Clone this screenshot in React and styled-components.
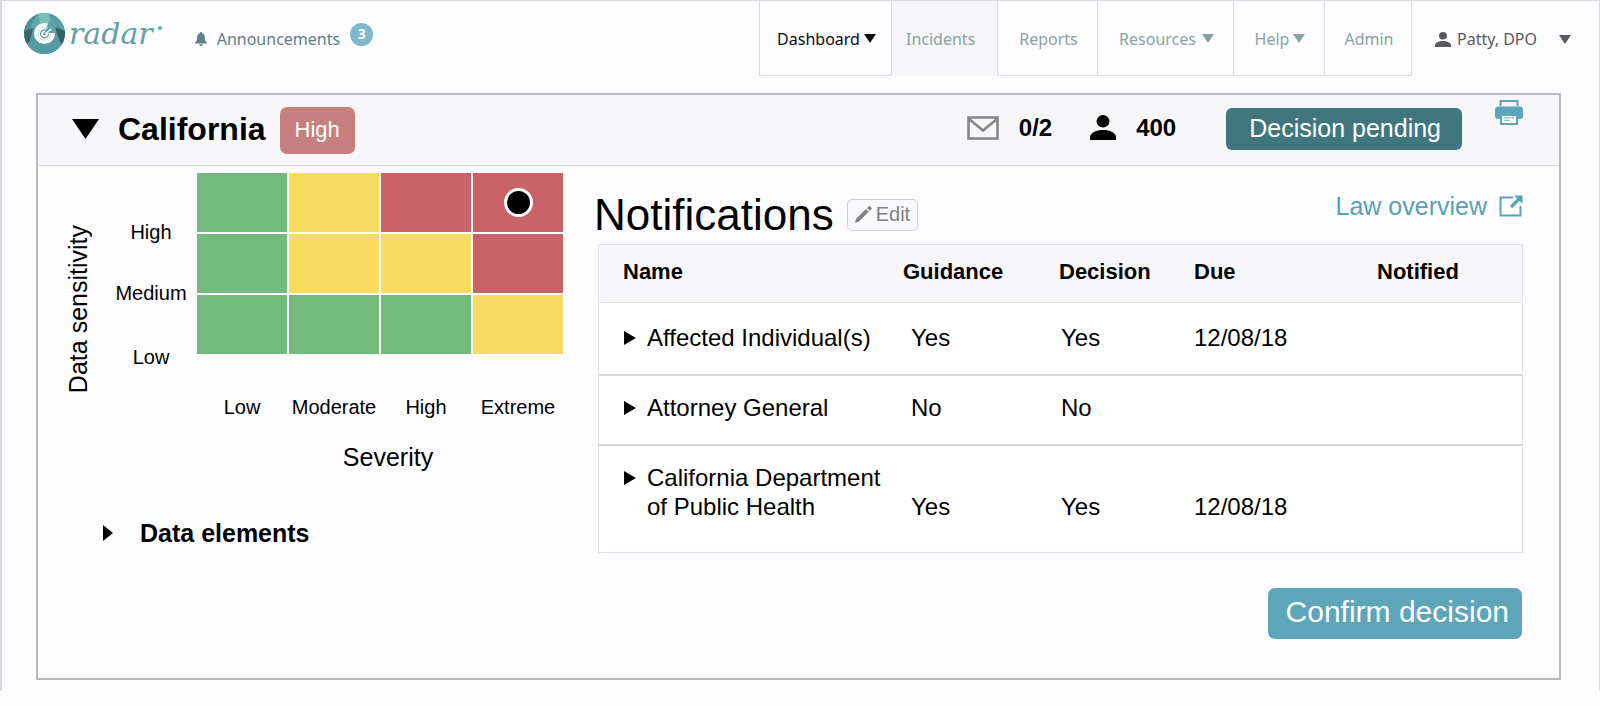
import React from "react";
import styled, { createGlobalStyle } from "styled-components";

const SANS = `"Liberation Sans", Arial, sans-serif`;
const NAV_SANS = `"Noto Sans", "Open Sans", sans-serif`;

const GlobalStyle = createGlobalStyle`
  *, *::before, *::after { box-sizing: border-box; }
  body { margin: 0; background: #fdfcff; color: #000; font-family: ${SANS}; }
  button { font: inherit; color: inherit; border: 0; background: none; padding: 0; cursor: pointer; }
  a { color: inherit; text-decoration: none; }
  svg { display: block; flex: none; }
`;

const Page = styled.div`
  border: solid #d9d9db;
  border-width: 1px 1px 0 2px;
  padding-bottom: 11px;
`;

/* Top bar */
const TopBar = styled.header`
  display: flex;
  align-items: stretch;
  height: 75px;
  font-family: ${NAV_SANS};
  font-size: 16px;
  line-height: 24px;
`;

const Brand = styled.a`
  display: flex;
  align-items: flex-start;
  padding: 12px 0 0 22px;
`;

const Wordmark = styled.span`
  margin-left: 4px;
  font-family: "DejaVu Serif", serif;
  font-style: italic;
  font-size: 30px;
  line-height: 42px;
  color: #64a2a3;
`;

const BrandDot = styled.span`
  width: 4px;
  height: 4px;
  margin: 13px 0 0 5px;
  border-radius: 50%;
  background: #6ba9ab;
`;

const Announcements = styled.a`
  display: flex;
  align-items: center;
  gap: 10px;
  margin-left: 33px;
  padding-top: 1px;
  color: #5d8083;
`;

const Count = styled.span`
  width: 23px;
  height: 23px;
  margin-bottom: 10px;
  border-radius: 50%;
  background: #7db9cb;
  color: #fff;
  font-weight: 700;
  font-size: 14px;
  line-height: 22px;
  text-align: center;
`;

const Nav = styled.nav`
  display: flex;
  margin-left: auto;
`;

const NavItem = styled.a`
  display: flex;
  align-items: center;
  justify-content: ${(p) => (p.$shaded ? "flex-start" : "center")};
  gap: ${(p) => p.$gap || 4}px;
  width: ${(p) => p.$width}px;
  padding: 1px 0 0 ${(p) => (p.$shaded ? 14 : 2)}px;
  border: solid #dadadc;
  border-width: 0 1px 1px 0;
  color: ${(p) => (p.$current ? "#0b0b0b" : "#8aa3a2")};
  background: ${(p) => (p.$shaded ? "#f6f5f8" : "transparent")};
  ${(p) => p.$shaded && "border-bottom-color: #f6f5f8;"}
  &:first-child { border-left-width: 1px; }
`;

const UserMenu = styled.button`
  display: flex;
  align-items: center;
  gap: 6px;
  width: 187px;
  padding: 1px 28px 0 23px;
  color: #5a5a5c;
  svg:last-child { margin-left: auto; }
`;

/* Incident panel */
const Panel = styled.main`
  margin: 17px 38px 0 34px;
  border: 2px solid #b9b9bb;
`;

const PanelHeader = styled.div`
  display: flex;
  align-items: center;
  height: 71px;
  padding: 0 36px 3px 34px;
  border-bottom: 1px solid #dadadc;
  background: #f7f6f9;
`;

const StateName = styled.h1`
  margin: 0 14px 0 19px;
  font-size: 32px;
  line-height: 40px;
`;

const RiskBadge = styled.span`
  margin-top: 4px;
  padding: 8px 15px 10px;
  border-radius: 7px;
  background: #c87f80;
  color: #fff;
  font-size: 22px;
  line-height: 29px;
`;

const Stats = styled.div`
  display: flex;
  align-items: center;
  margin-left: auto;
`;

const Stat = styled.span`
  display: flex;
  align-items: center;
  gap: 20px;
  margin-right: ${(p) => p.$after}px;
  padding-bottom: 2px;
  font-weight: 700;
  font-size: 24px;
  line-height: 29px;
`;

const StatusButton = styled.button`
  height: 42px;
  padding: 0 21px 2px 23px;
  border-radius: 6px;
  background: #40777f;
  color: #fff;
  font-size: 25px;
  line-height: 40px;
`;

const PrintButton = styled.button`
  align-self: flex-start;
  margin: 5px 0 0 33px;
`;

const PanelBody = styled.div`
  display: flex;
  align-items: flex-start;
  padding-right: 36px;
`;

/* Risk matrix */
const RiskColumn = styled.section`
  flex: none;
  width: 560px;
  padding: 7px 0 0 24px;
`;

const Matrix = styled.div`
  display: grid;
  grid-template-columns: 32px 103px 366px;
  align-items: start;
`;

const SensitivityTitle = styled.div`
  writing-mode: vertical-rl;
  transform: rotate(180deg);
  margin-top: 52px;
  font-size: 25px;
  line-height: 32px;
  white-space: nowrap;
`;

const SensitivityLabels = styled.div`
  display: grid;
  grid-template-rows: 60px 61px 67px;
  align-items: center;
  justify-items: center;
  padding: 29px 0 0 11px;
  font-size: 20px;
  line-height: 24px;
`;

const Cells = styled.div`
  display: grid;
  grid-template-columns: repeat(4, 90px);
  grid-auto-rows: 59px;
  gap: 2px;
`;

const LEVEL = { low: "#73bb7d", mid: "#f8db60", top: "#c96367" };

const Cell = styled.div`
  display: flex;
  align-items: center;
  justify-content: center;
  background: ${(p) => LEVEL[p.$level]};
`;

const Marker = styled.span`
  width: 29px;
  height: 29px;
  border: 3px solid #fff;
  border-radius: 50%;
  background: #000;
`;

const SeverityLabels = styled.div`
  display: grid;
  grid-template-columns: repeat(4, 90px);
  column-gap: 2px;
  margin-top: 2px;
  grid-column: 3;
  font-size: 20px;
  line-height: 24px;
  text-align: center;
`;

const SeverityTitle = styled.div`
  grid-column: 3;
  margin-top: 23px;
  padding-left: 16px;
  font-size: 25px;
  line-height: 30px;
  text-align: center;
`;

const DataElements = styled.button`
  display: flex;
  align-items: center;
  gap: 27px;
  margin: 46px 0 0 41px;
  font-weight: 700;
  font-size: 25px;
  line-height: 30px;
`;

/* Notifications */
const NotificationColumn = styled.section`
  flex: 1;
  min-width: 0;
  padding: 24px 0 39px;
`;

const TitleRow = styled.div`
  display: flex;
  align-items: center;
  margin-bottom: 4px;
`;

const Title = styled.h2`
  margin: 0 13px 0 -4px;
  font-weight: 400;
  font-size: 44px;
  line-height: 50px;
`;

const EditButton = styled.button`
  display: flex;
  align-items: center;
  gap: 4px;
  height: 32px;
  padding: 0 7px 2px;
  border: 1px solid #cfcfd1;
  border-radius: 5px;
  background: #f9f8fb;
  color: #808082;
  font-size: 20px;
  line-height: 24px;
`;

const LawLink = styled.a`
  display: flex;
  align-self: flex-start;
  align-items: center;
  gap: 12px;
  margin-left: auto;
  padding-top: 1px;
  color: #56a2b5;
  font-size: 25px;
  line-height: 30px;
`;

const Table = styled.table`
  width: 100%;
  table-layout: fixed;
  border: 1px solid #e3e3e5;
  border-collapse: separate;
  border-spacing: 0;
  background: #fff;
  text-align: left;
`;

const Col = styled.col`
  width: ${(p) => (p.$width ? `${p.$width}px` : "auto")};
`;

const HeadCell = styled.th`
  padding: 14px 0 17px;
  border-bottom: 1px solid #e3e3e5;
  background: #f7f6f9;
  font-size: 22px;
  line-height: 26px;
  &:first-child { padding-left: 24px; }
`;

const BodyCell = styled.td`
  padding: 17px 0 22px ${(p) => p.$inset || 0}px;
  border-bottom: 2px solid #d6d6d8;
  font-size: 24px;
  line-height: 29px;
  vertical-align: bottom;
  tr:first-child & { padding-top: 20px; }
  tr:last-child & { padding-bottom: 31px; border-bottom: 0; }
`;

const Expander = styled.button`
  display: flex;
  align-items: flex-start;
  gap: 11px;
  padding-right: 12px;
  text-align: left;
  svg { margin-top: 8px; }
`;

const Actions = styled.div`
  display: flex;
  justify-content: flex-end;
  margin-top: 35px;
`;

const ConfirmButton = styled.button`
  height: 51px;
  padding: 0 13px 3px 18px;
  margin-right: 1px;
  border-radius: 7px;
  background: #5da6b9;
  color: #fff;
  font-size: 30px;
  line-height: 46px;
`;

/* Drawings */
const Down = ({ w = 12, h = 9 }) => (
  <svg width={w} height={h} viewBox="0 0 12 9" preserveAspectRatio="none" aria-hidden="true">
    <path d="M0 0h12L6 9z" fill="currentColor" />
  </svg>
);

const Right = ({ w = 12, h = 14 }) => (
  <svg width={w} height={h} viewBox="0 0 12 14" preserveAspectRatio="none" aria-hidden="true">
    <path d="M0 0l12 7-12 7z" fill="currentColor" />
  </svg>
);

const Logo = () => (
  <svg width="41" height="41" viewBox="0 0 41 41" aria-hidden="true">
    <defs>
      <clipPath id="disc"><circle cx="20.5" cy="20.5" r="20.5" /></clipPath>
    </defs>
    <g clipPath="url(#disc)">
      <rect width="41" height="41" fill="#5a9da3" />
      <path d="M0 0h17L9 15 0 20z" fill="#4f9097" />
      <path d="M14 0l-8 14 12 4 4-18z" fill="#5fa9aa" />
      <path d="M14 0h11l3 12-10 6z" fill="#78bfb8" />
      <path d="M24 0h17v18l-9-1z" fill="#5c9ca5" />
      <path d="M31 14l10 4v15l-5-2z" fill="#345f69" />
      <path d="M0 18l9-3-3 13-6 6z" fill="#3a6670" />
      <path d="M10 17L3 35l9 6h19l7-8-7-17z" fill="#559ba5" />
    </g>
    <circle cx="20.5" cy="20.500" r="10.500" fill="#fff" />
    <path d="M20.500 20L25 8l7 3-1 9z" fill="#5fa6aa" />
    <path d="M24 15.200A6.500 6.500 0 1 0 27 21" fill="none" stroke="#c3dcde" strokeWidth="1" />
    <path d="M22.500 17.400A4 4 0 1 0 24.500 21" fill="none" stroke="#5a9da3" strokeWidth="1.200" />
    <path d="M20.500 21l7-5" stroke="#fff" strokeWidth="1.300" />
    <circle cx="20.500" cy="21" r="1.400" fill="#5a9da3" />
  </svg>
);

const Bell = () => (
  <svg width="12" height="14" viewBox="0 0 12 14" aria-hidden="true">
    <path d="M6 0c.7 0 1.100.500 1.100 1.200C9 1.800 9.800 3.300 9.800 5.500c0 3 .7 4 2.200 5.200v.8H0v-.8c1.500-1.200 2.200-2.200 2.200-5.200 0-2.200.8-3.700 2.700-4.300C4.900.5 5.300 0 6 0z" fill="currentColor" />
    <path d="M4.300 12.200h3.400C7.600 13.300 7 14 6 14s-1.600-.7-1.700-1.800z" fill="currentColor" />
  </svg>
);

const Person = ({ w, h }) => (
  <svg width={w} height={h} viewBox="0 0 25 25" preserveAspectRatio="none" aria-hidden="true">
    <circle cx="12.500" cy="6.300" r="6.200" fill="currentColor" />
    <path d="M0 25v-2.500C0 17.500 6 15 12.500 15S25 17.500 25 22.500V25z" fill="currentColor" />
  </svg>
);

const Envelope = () => (
  <svg width="32" height="24" viewBox="0 0 32 24" aria-hidden="true">
    <path d="M1.500 1.500h29v21h-29zM2 3l14 11.500L30 3" fill="none" stroke="#858587" strokeWidth="2.600" />
  </svg>
);

const Printer = () => (
  <svg width="28" height="25" viewBox="0 0 28 25" aria-hidden="true">
    <path d="M5.500 6V1h17v5" fill="none" stroke="#5da6b9" strokeWidth="2" />
    <path d="M3.500 6.500h21C27 6.500 28 8 28 10v6c0 2-1 3-3 3h-2v-4.500H5V19H3c-2 0-3-1-3-3v-6c0-2 1-3.500 3.500-3.500z" fill="#5da6b9" />
    <path d="M6 15h16v9H6z" fill="#fff" stroke="#5da6b9" strokeWidth="2" />
    <path d="M9 17.800h10M9 20.300h6" stroke="#8fbfcc" strokeWidth="1.300" />
  </svg>
);

const Pencil = () => (
  <svg width="17" height="17" viewBox="0 0 17 17" aria-hidden="true">
    <path d="M0 17l1-4.200L11 3l2.700 2.700-10 10zM12 2l1.600-1.500c.5-.5 1.100-.5 1.600 0l1.200 1.200c.5.5.5 1.100 0 1.600L14.700 4.700z" fill="currentColor" />
  </svg>
);

const External = () => (
  <svg width="24" height="22" viewBox="0 0 24 22" aria-hidden="true">
    <path d="M14 2.500H1.500V20.500h20V11" fill="none" stroke="currentColor" strokeWidth="2" />
    <path d="M12 12l8-8" stroke="currentColor" strokeWidth="3.200" />
    <path d="M15 .5h8.500V9z" fill="currentColor" />
  </svg>
);

const navItems = [
  { label: "Dashboard", width: 133, menu: true, current: true },
  { label: "Incidents", width: 106, shaded: true },
  { label: "Reports", width: 100 },
  { label: "Resources", width: 136, menu: true, gap: 6 },
  { label: "Help", width: 91, menu: true },
  { label: "Admin", width: 87 },
];

const matrix = [
  ["low", "mid", "top", "top"],
  ["low", "mid", "mid", "top"],
  ["low", "low", "low", "mid"],
];

const notifications = [
  { name: "Affected Individual(s)", guidance: "Yes", decision: "Yes", due: "12/08/18" },
  { name: "Attorney General", guidance: "No", decision: "No", due: "" },
  { name: "California Department of Public Health", guidance: "Yes", decision: "Yes", due: "12/08/18" },
];

export default function App() {
  return (
    <>
      <GlobalStyle />
      <Page>
        <TopBar>
          <Brand href="#">
            <Logo />
            <Wordmark>radar</Wordmark>
            <BrandDot />
          </Brand>
          <Announcements href="#announcements">
            <Bell />
            <span>Announcements</span>
            <Count>3</Count>
          </Announcements>
          <Nav aria-label="Main">
            {navItems.map((n) => (
              <NavItem
                key={n.label}
                href={`#${n.label.toLowerCase()}`}
                $width={n.width}
                $gap={n.gap}
                $current={n.current}
                $shaded={n.shaded}
              >
                {n.label}
                {n.menu && <Down />}
              </NavItem>
            ))}
          </Nav>
          <UserMenu type="button">
            <Person w={16} h={15} />
            Patty, DPO
            <Down />
          </UserMenu>
        </TopBar>

        <Panel>
          <PanelHeader>
            <button type="button" aria-label="Collapse California">
              <Down w={27} h={20} />
            </button>
            <StateName>California</StateName>
            <RiskBadge>High</RiskBadge>
            <Stats>
              <Stat $after={38}>
                <Envelope />
                0/2
              </Stat>
              <Stat $after={50}>
                <Person w={26} h={25} />
                400
              </Stat>
              <StatusButton type="button">Decision pending</StatusButton>
            </Stats>
            <PrintButton type="button" aria-label="Print">
              <Printer />
            </PrintButton>
          </PanelHeader>

          <PanelBody>
            <RiskColumn>
              <Matrix>
                <SensitivityTitle>Data sensitivity</SensitivityTitle>
                <SensitivityLabels>
                  <span>High</span>
                  <span>Medium</span>
                  <span>Low</span>
                </SensitivityLabels>
                <Cells>
                  {matrix.map((row, r) =>
                    row.map((level, c) => (
                      <Cell key={`${r}-${c}`} $level={level}>
                        {r === 0 && c === 3 && <Marker />}
                      </Cell>
                    ))
                  )}
                </Cells>
                <SeverityLabels>
                  <span>Low</span>
                  <span>Moderate</span>
                  <span>High</span>
                  <span>Extreme</span>
                </SeverityLabels>
                <SeverityTitle>Severity</SeverityTitle>
              </Matrix>
              <DataElements type="button">
                <Right w={10} h={16} />
                Data elements
              </DataElements>
            </RiskColumn>

            <NotificationColumn>
              <TitleRow>
                <Title>Notifications</Title>
                <EditButton type="button">
                  <Pencil />
                  Edit
                </EditButton>
                <LawLink href="#law">
                  Law overview
                  <External />
                </LawLink>
              </TitleRow>
              <Table>
                <colgroup>
                  <Col $width={304} />
                  <Col $width={156} />
                  <Col $width={135} />
                  <Col $width={183} />
                  <Col />
                </colgroup>
                <thead>
                  <tr>
                    <HeadCell scope="col">Name</HeadCell>
                    <HeadCell scope="col">Guidance</HeadCell>
                    <HeadCell scope="col">Decision</HeadCell>
                    <HeadCell scope="col">Due</HeadCell>
                    <HeadCell scope="col">Notified</HeadCell>
                  </tr>
                </thead>
                <tbody>
                  {notifications.map((n) => (
                    <tr key={n.name}>
                      <BodyCell $inset={25}>
                        <Expander type="button">
                          <Right />
                          <span>{n.name}</span>
                        </Expander>
                      </BodyCell>
                      <BodyCell $inset={8}>{n.guidance}</BodyCell>
                      <BodyCell $inset={2}>{n.decision}</BodyCell>
                      <BodyCell>{n.due}</BodyCell>
                      <BodyCell />
                    </tr>
                  ))}
                </tbody>
              </Table>
              <Actions>
                <ConfirmButton type="button">Confirm decision</ConfirmButton>
              </Actions>
            </NotificationColumn>
          </PanelBody>
        </Panel>
      </Page>
    </>
  );
}
